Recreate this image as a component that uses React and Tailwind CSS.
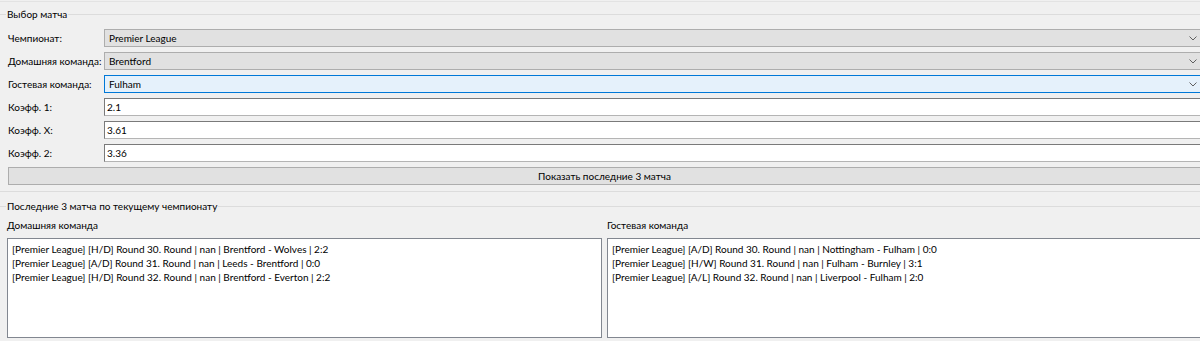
import React from 'react';

function Chevron() {
  return (
    <svg width="8" height="5" viewBox="0 0 8 5" className="shrink-0">
      <path d="M0.5 0.5 L4 4 L7.5 0.5" fill="none" stroke="#606060" strokeWidth="1" />
    </svg>
  );
}

function GroupTitle({ children }) {
  return (
    <div className="flex items-center h-[14px]">
      <div className="w-[6px] h-px bg-[#dcdcdc]" />
      <span className="px-px leading-[14px]">{children}</span>
      <div className="flex-1 h-px bg-[#dcdcdc]" />
    </div>
  );
}

function Combo({ value, focused }) {
  const cls = focused
    ? 'bg-[#e5f1fb] border-[#0078d7]'
    : 'bg-[#e1e1e1] border-[#adadad]';
  return (
    <div className={'flex-1 h-[18px] border flex items-center justify-between pl-[4px] pr-[3px] ' + cls}>
      <span className="leading-[16px]">{value}</span>
      <Chevron />
    </div>
  );
}

function Edit({ value }) {
  return (
    <div className="flex-1 h-[18px] bg-white border border-[#b4b4b4] border-t-[#7a7a7a] border-l-[#7a7a7a] flex items-center pl-[2px]">
      <span className="leading-[16px]">{value}</span>
    </div>
  );
}

function Row({ label, children }) {
  return (
    <div className="flex items-center h-[18px]">
      <div className="w-[96px] shrink-0 leading-[18px] whitespace-nowrap">{label}</div>
      {children}
    </div>
  );
}

const home = [
  '[Premier League] [H/D] Round 30. Round | nan | Brentford - Wolves | 2:2',
  '[Premier League] [A/D] Round 31. Round | nan | Leeds - Brentford | 0:0',
  '[Premier League] [H/D] Round 32. Round | nan | Brentford - Everton | 2:2',
];

const away = [
  '[Premier League] [A/D] Round 30. Round | nan | Nottingham - Fulham | 0:0',
  '[Premier League] [H/W] Round 31. Round | nan | Fulham - Burnley | 3:1',
  '[Premier League] [A/L] Round 32. Round | nan | Liverpool - Fulham | 2:0',
];

function MatchList({ title, lines }) {
  return (
    <div className="flex flex-col">
      <div className="h-[14px] leading-[14px] mb-[6px]">{title}</div>
      <div className="h-[100px] bg-white border border-[#828790] pl-[4px] pt-[3px]">
        {lines.map((l) => (
          <div key={l} className="leading-[14px] whitespace-nowrap">{l}</div>
        ))}
      </div>
    </div>
  );
}

export default function App() {
  return (
    <div className="w-[1200px] h-[341px] overflow-hidden bg-[#f0f0f0] text-black text-[10px] font-[Lato,sans-serif]">
      <div className="w-[1210px]">
        <div className="h-px mt-px bg-[#e3e3e3]" />
        <div className="mt-[5px]">
          <GroupTitle>Выбор матча</GroupTitle>
        </div>
        <div className="flex flex-col gap-[5px] pl-[8px] pr-[9px] mt-[8px]">
          <Row label="Чемпионат:">
            <Combo value="Premier League" />
          </Row>
          <Row label="Домашняя команда:">
            <Combo value="Brentford" />
          </Row>
          <Row label="Гостевая команда:">
            <Combo value="Fulham" focused />
          </Row>
          <Row label="Коэфф. 1:">
            <Edit value="2.1" />
          </Row>
          <Row label="Коэфф. X:">
            <Edit value="3.61" />
          </Row>
          <Row label="Коэфф. 2:">
            <Edit value="3.36" />
          </Row>
          <div className="h-[18px] bg-[#e1e1e1] border border-[#adadad] flex items-center justify-center">
            <span className="leading-[16px]">Показать последние 3 матча</span>
          </div>
        </div>
        <div className="h-px bg-[#dcdcdc] mt-[6px]" />
        <div className="mt-[7px]">
          <GroupTitle>Последние 3 матча по текущему чемпионату</GroupTitle>
        </div>
        <div className="grid grid-cols-2 gap-[5px] pl-[7px] pr-[8px] mt-[5px]">
          <MatchList title="Домашняя команда" lines={home} />
          <MatchList title="Гостевая команда" lines={away} />
        </div>
      </div>
    </div>
  );
}
